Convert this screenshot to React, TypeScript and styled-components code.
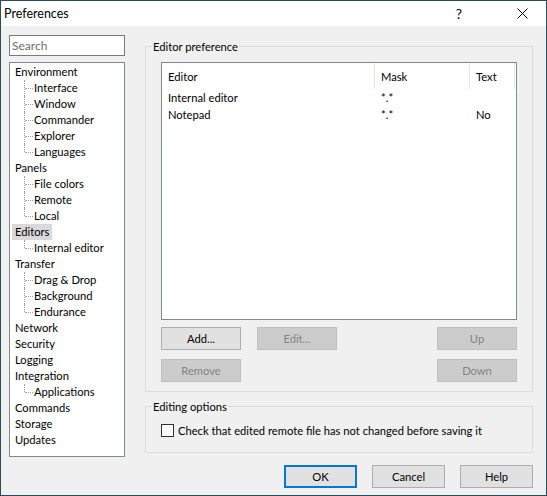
import React from 'react';
import styled, { createGlobalStyle, css } from 'styled-components';

const GlobalStyle = createGlobalStyle`
  html, body {
    margin: 0;
    padding: 0;
    background: #ffffff;
  }
  * {
    box-sizing: border-box;
  }
`;

type TreeNode = { label: string; children?: string[]; selected?: boolean };

const tree: TreeNode[] = [
  { label: 'Environment', children: ['Interface', 'Window', 'Commander', 'Explorer', 'Languages'] },
  { label: 'Panels', children: ['File colors', 'Remote', 'Local'] },
  { label: 'Editors', children: ['Internal editor'], selected: true },
  { label: 'Transfer', children: ['Drag & Drop', 'Background', 'Endurance'] },
  { label: 'Network' },
  { label: 'Security' },
  { label: 'Logging' },
  { label: 'Integration', children: ['Applications'] },
  { label: 'Commands' },
  { label: 'Storage' },
  { label: 'Updates' },
];

const editors = [
  { name: 'Internal editor', mask: '*.*', text: '' },
  { name: 'Notepad', mask: '*.*', text: 'No' },
];

const App = () => {
  return (
    <>
      <GlobalStyle />
      <Window>
        <TitleBar>
          <Title>Preferences</Title>
          <TitleButtons>
            <HelpGlyph>?</HelpGlyph>
            <CloseGlyph viewBox="0 0 11 11" width="11" height="11">
              <path d="M0.5 0.5 L10.5 10.5 M10.5 0.5 L0.5 10.5" stroke="#000" strokeWidth="1" fill="none" />
            </CloseGlyph>
          </TitleButtons>
        </TitleBar>
        <Body>
          <Top>
            <Sidebar>
              <SearchBox placeholder="Search" />
              <Tree>
                {tree.map((node) => (
                  <li key={node.label}>
                    <TopItem>
                      <ItemLabel selected={node.selected}>{node.label}</ItemLabel>
                    </TopItem>
                    {node.children && (
                      <ChildList>
                        {node.children.map((c, i) => (
                          <ChildItem key={c} last={i === node.children!.length - 1}>
                            {c}
                          </ChildItem>
                        ))}
                      </ChildList>
                    )}
                  </li>
                ))}
              </Tree>
            </Sidebar>
            <Main>
              <Group height={353}>
                <Legend>Editor preference</Legend>
                <ListView>
                  <HeaderRow>
                    <HeaderCell width={213}>Editor</HeaderCell>
                    <HeaderCell width={95}>Mask</HeaderCell>
                    <HeaderCell width={45}>Text</HeaderCell>
                  </HeaderRow>
                  {editors.map((e) => (
                    <Row key={e.name}>
                      <Cell width={213}>{e.name}</Cell>
                      <Cell width={95}>{e.mask}</Cell>
                      <Cell width={45}>{e.text}</Cell>
                    </Row>
                  ))}
                </ListView>
                <ButtonRows>
                  <ButtonRow>
                    <Button>Add...</Button>
                    <Button disabled>Edit...</Button>
                    <Spacer />
                    <Button disabled>Up</Button>
                  </ButtonRow>
                  <ButtonRow>
                    <Button disabled>Remove</Button>
                    <Spacer />
                    <Button disabled>Down</Button>
                  </ButtonRow>
                </ButtonRows>
              </Group>
              <Group height={54}>
                <Legend>Editing options</Legend>
                <CheckRow>
                  <CheckBox />
                  <span>Check that edited remote file has not changed before saving it</span>
                </CheckRow>
              </Group>
            </Main>
          </Top>
          <Footer>
            <DialogButton primary>OK</DialogButton>
            <DialogButton>Cancel</DialogButton>
            <DialogButton>Help</DialogButton>
          </Footer>
        </Body>
      </Window>
    </>
  );
};

export default App;

const font = css`
  font-family: 'Segoe UI', Lato, 'Noto Sans', sans-serif;
  font-size: 11.2px;
  color: #000;
`;

const Window = styled.div`
  ${font};
  width: 547px;
  height: 496px;
  border: 1px solid #2b4a5a;
  display: flex;
  flex-direction: column;
  background: #f0f0f0;
`;

const TitleBar = styled.div`
  height: 25px;
  background: #ffffff;
  display: flex;
  align-items: center;
  justify-content: space-between;
  padding-left: 3px;
`;

const Title = styled.div`
  font-size: 12.5px;
`;

const TitleButtons = styled.div`
  display: flex;
  align-items: center;
`;

const HelpGlyph = styled.span`
  font-size: 14px;
  width: 46px;
  text-align: center;
  margin-right: 35px;
`;

const CloseGlyph = styled.svg`
  display: block;
  margin-right: 18px;
`;

const Body = styled.div`
  flex: 1;
  padding: 9px 13px 0 8px;
  display: flex;
  flex-direction: column;
`;

const Top = styled.div`
  display: flex;
  gap: 20px;
`;

const Sidebar = styled.div`
  width: 116px;
  display: flex;
  flex-direction: column;
  gap: 6px;
`;

const SearchBox = styled.input`
  ${font};
  font-size: 12px;
  height: 21px;
  width: 116px;
  border: 1px solid #7a7a7a;
  background: #fff;
  padding: 0 2px;
  outline: none;
  &::placeholder {
    color: #6d6d6d;
  }
`;

const Tree = styled.ul`
  list-style: none;
  margin: 0;
  padding: 1px 0 0 0;
  height: 395px;
  border: 1px solid #828790;
  background: #fff;
  overflow: hidden;
`;

const TopItem = styled.div`
  height: 16px;
  line-height: 16px;
  padding-left: 2px;
`;

const ItemLabel = styled.span<{ selected?: boolean }>`
  display: inline-block;
  padding: 0 3px;
  height: 16px;
  ${({ selected }) =>
    selected &&
    css`
      background: #d9d9d9;
    `}
`;

const ChildList = styled.ul`
  list-style: none;
  margin: 0;
  padding: 0;
`;

const ChildItem = styled.li<{ last?: boolean }>`
  position: relative;
  height: 16px;
  line-height: 16px;
  padding-left: 24px;
  &::before {
    content: '';
    position: absolute;
    left: 14px;
    top: 0;
    height: ${({ last }) => (last ? '8px' : '16px')};
    border-left: 1px dotted #a0a0a0;
  }
  &::after {
    content: '';
    position: absolute;
    left: 15px;
    top: 8px;
    width: 8px;
    border-top: 1px dotted #a0a0a0;
  }
`;

const Main = styled.div`
  width: 388px;
  padding-top: 4px;
  display: flex;
  flex-direction: column;
  gap: 7px;
`;

const Group = styled.fieldset<{ height: number }>`
  margin: 0;
  padding: 8px 15px 0 15px;
  border: 1px solid #dcdcdc;
  height: ${({ height }) => height}px;
  min-width: 0;
`;

const Legend = styled.legend`
  padding: 0 1px;
  margin-left: -9px;
  line-height: 15px;
`;

const ListView = styled.div`
  height: 258px;
  border: 1px solid #828790;
  background: #fff;
`;

const HeaderRow = styled.div`
  display: flex;
  height: 26px;
  align-items: stretch;
`;

const HeaderCell = styled.div<{ width: number }>`
  width: ${({ width }) => width}px;
  display: flex;
  align-items: center;
  padding-left: 6px;
  border-right: 1px solid #e5e5e5;
`;

const Row = styled.div`
  display: flex;
  height: 17px;
  line-height: 17px;
`;

const Cell = styled.div<{ width: number }>`
  width: ${({ width }) => width}px;
  padding-left: 6px;
  white-space: nowrap;
`;

const ButtonRows = styled.div`
  display: flex;
  flex-direction: column;
  gap: 9px;
  padding-top: 7px;
`;

const ButtonRow = styled.div`
  display: flex;
  gap: 16px;
`;

const Spacer = styled.div`
  flex: 1;
`;

const Button = styled.button`
  ${font};
  width: 80px;
  height: 23px;
  padding: 0;
  border: 1px solid #adadad;
  background: #e1e1e1;
  &:disabled {
    border-color: #bfbfbf;
    background: #cccccc;
    color: #838383;
  }
`;

const CheckRow = styled.div`
  display: flex;
  align-items: center;
  gap: 4px;
  padding-top: 2px;
  white-space: nowrap;
`;

const CheckBox = styled.span`
  flex: none;
  width: 13px;
  height: 13px;
  border: 1px solid #333;
  background: #fff;
`;

const Footer = styled.div`
  display: flex;
  justify-content: flex-end;
  gap: 15px;
  margin-top: 8px;
`;

const DialogButton = styled.button<{ primary?: boolean }>`
  ${font};
  width: 73px;
  height: 23px;
  padding: 0;
  background: #e1e1e1;
  border: 1px solid #adadad;
  ${({ primary }) =>
    primary &&
    css`
      border: 2px solid #0078d7;
    `}
`;
